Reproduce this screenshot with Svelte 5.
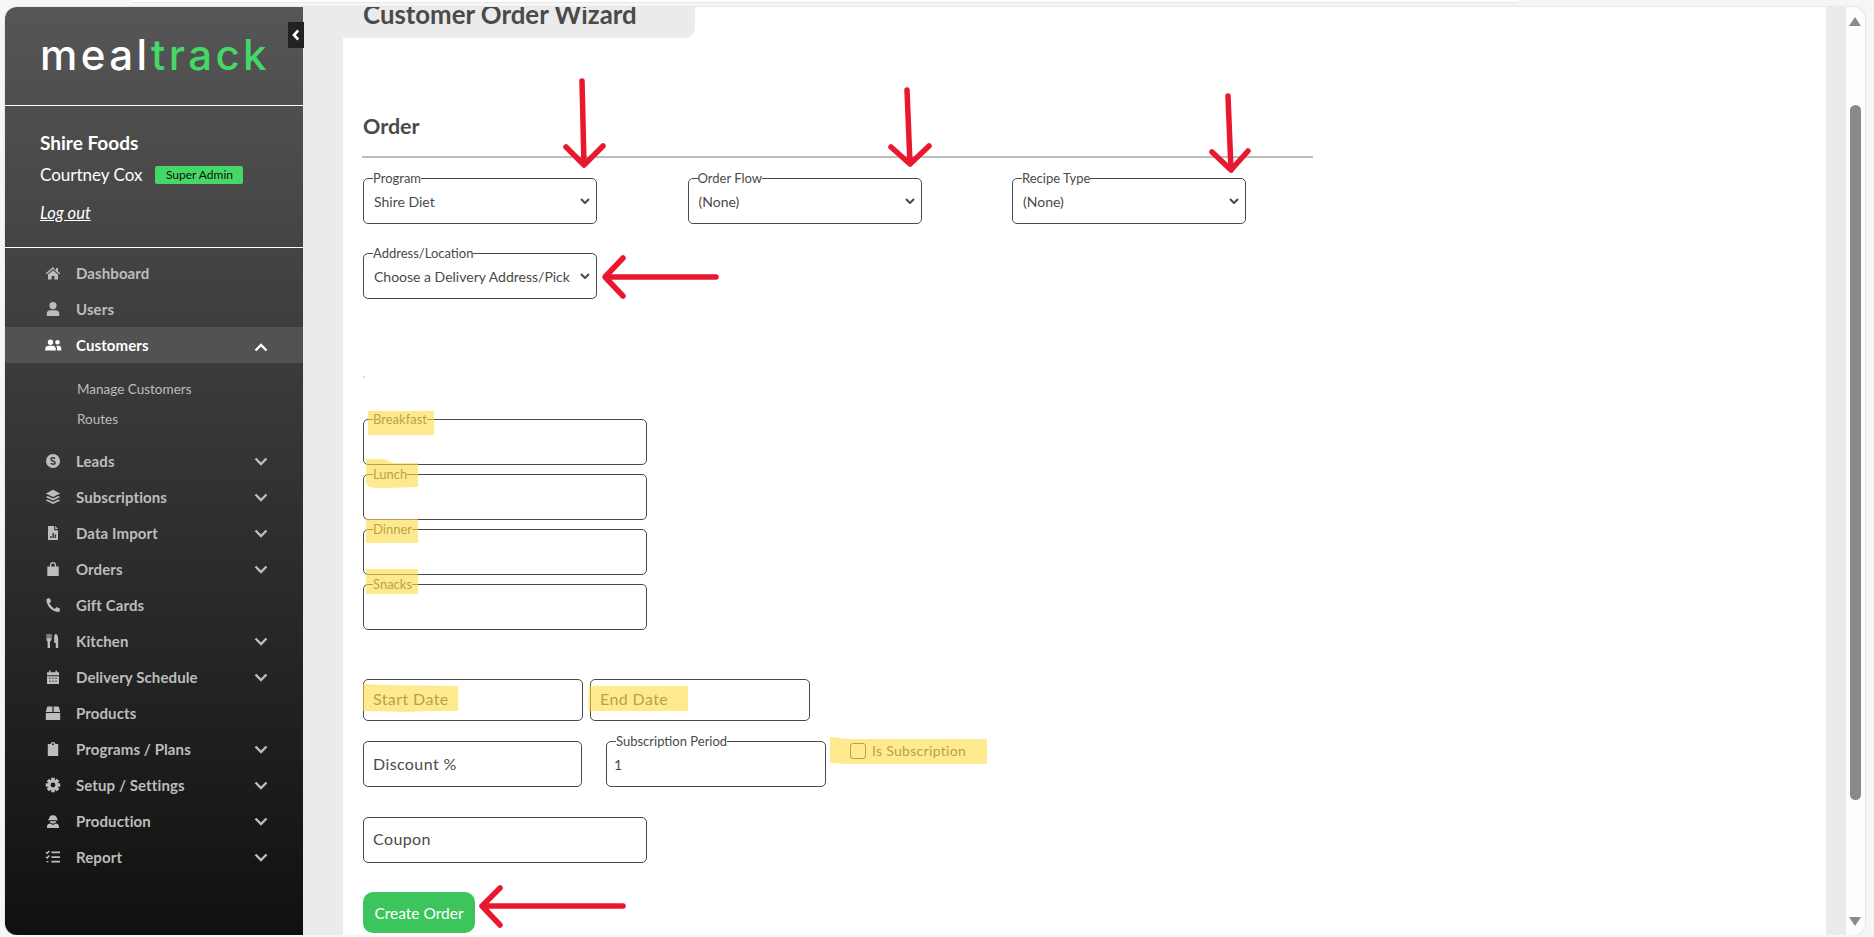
<script>
  const cogTeeth = () => {
    const pts = [];
    for (let i = 0; i < 8; i++) {
      const a = (i * Math.PI) / 4;
      const w = 0.24;
      [[5.2, -w - 0.12], [7.4, -w], [7.4, w], [5.2, w + 0.12]].forEach(([r, o]) => {
        pts.push(`${(8 + r * Math.cos(a + o)).toFixed(2)} ${(8 + r * Math.sin(a + o)).toFixed(2)}`);
      });
    }
    return 'M' + pts.join('L') + 'Z M8 5.6a2.4 2.4 0 1 0 0 4.8 2.4 2.4 0 0 0 0-4.8Z';
  };

  const icons = {
    home: { d: 'M8 2 .8 8.2l.9 1L8 3.9l6.3 5.3.9-1-2.2-1.9V3h-2v2.6Z M3 9.6V14.5h3.6v-3.6h2.8v3.6H13V9.6L8 5.4Z' },
    user: { d: 'M8 1a3.6 3.6 0 1 1 0 7.2A3.6 3.6 0 0 1 8 1Z M1.8 15v-2.2A3.6 3.6 0 0 1 5.4 9.2h5.2a3.6 3.6 0 0 1 3.6 3.6V15Z' },
    users: { w: 18, d: 'M5.5 2.5a2.7 2.7 0 1 1 0 5.4 2.7 2.7 0 0 1 0-5.4Z M12.5 3a2.3 2.3 0 1 1 0 4.6 2.3 2.3 0 0 1 0-4.6Z M.2 13.5v-2.2a3 3 0 0 1 3-2.6h4.6a3 3 0 0 1 3 2.6v2.2Z M12 13.5v-2.4c0-.9-.3-1.7-.9-2.3h3a2.5 2.5 0 0 1 2.2 2.4v2.3Z' },
    dollar: { d: 'M8 1a7 7 0 1 1 0 14A7 7 0 0 1 8 1Z', s: 'M10 5.8C9.6 5 8.8 4.8 8 4.8c-1.2 0-2 .6-2 1.5 0 2.2 4.1 1.2 4.1 3.4 0 .9-.9 1.5-2.1 1.5-.9 0-1.7-.3-2.1-1.1' },
    layers: { d: 'M8 .8 15.2 4.4 8 8 .8 4.4Z M2.6 6.9.8 7.9 8 11.5l7.2-3.6-1.8-1L8 9.6Z M2.6 10.4l-1.8 1L8 15l7.2-3.6-1.8-1L8 13.1Z' },
    file: { d: 'M3 1h6.2v4.2H13V15H3Z M10.2 1 13 4h-2.8Z', s: 'M6 13v-2M8.2 13V8M10.4 13V9.5' },
    bag: { d: 'M2.3 5.4h2.6V4a3.1 3.1 0 0 1 6.2 0v1.4h2.6V15H2.3Z M6.2 5.4h3.6V4a1.8 1.8 0 0 0-3.6 0Z' },
    phone: { d: 'M4.6 1 1.4 2C1.4 9.2 7 15 14.2 15l1-3.2-3.7-1.7-1.6 1.9C8 11 5.2 8.2 4.4 6.2L6.2 4.6Z' },
    utensils: { d: 'M1.5 1h1v4.2h.9V1h1.2v4.2h.9V1h1v5.4A2.1 2.1 0 0 1 5 8.4V15H2.6V8.4A2.1 2.1 0 0 1 1.5 6.4Z M11 1c1.6.4 2.2 3.2 2.2 6.4V15h-2.4v-5H9.2V3.5C9.2 2 10 1 11 1Z' },
    calendar: { d: 'M2 3.2h2V1.4h1.5v1.8h5V1.4H12v1.8h2v3H2Z M2 7.2h12V15H2Z', s: 'M4.5 9.2h1M7.5 9.2h1M10.5 9.2h1M4.5 12.2h1M7.5 12.2h1M10.5 12.2h1' },
    box: { d: 'M.8 6.9 2 2.3C2.2 1.7 2.6 1.5 3 1.5h4.4v5.4Z M8.6 1.5H13c.4 0 .8.2 1 .8l1.2 4.6H8.6Z M.8 7.9h14.4V15H.8Z' },
    clip: { d: 'M2.8 3h2.7a2.6 2.6 0 0 1 5 0h2.7v12H2.8Z M8 2.2a1 1 0 1 0 0 2 1 1 0 0 0 0-2Z' },
    cog: { d: cogTeeth() },
    hat: { d: 'M4 6.2A4 4 0 0 1 12 6.2h1v1H3v-1Z M4.6 8.2h6.8A3.4 3.4 0 0 1 8 10.4a3.4 3.4 0 0 1-3.4-2.2Z M2 15v-1.4a3.4 3.4 0 0 1 3.2-3L8 12l2.8-1.4a3.4 3.4 0 0 1 3.2 3V15Z' },
    tasks: { d: 'M6.4 2.6H15v1.7H6.4Z M6.4 7.2H15v1.7H6.4Z M6.4 11.8H15v1.7H6.4Z', l: 'M1 3.2l1.2 1.1L4.4 2M1 7.8 2.2 8.9 4.4 6.6M1.4 12.6h2' }
  };

  const before = [
    { label: 'Dashboard', icon: 'home' },
    { label: 'Users', icon: 'user' }
  ];
  const after = [
    { label: 'Leads', icon: 'dollar', more: true },
    { label: 'Subscriptions', icon: 'layers', more: true },
    { label: 'Data Import', icon: 'file', more: true },
    { label: 'Orders', icon: 'bag', more: true },
    { label: 'Gift Cards', icon: 'phone' },
    { label: 'Kitchen', icon: 'utensils', more: true },
    { label: 'Delivery Schedule', icon: 'calendar', more: true },
    { label: 'Products', icon: 'box' },
    { label: 'Programs / Plans', icon: 'clip', more: true },
    { label: 'Setup / Settings', icon: 'cog', more: true },
    { label: 'Production', icon: 'hat', more: true },
    { label: 'Report', icon: 'tasks', more: true }
  ];
  const meals = ['Breakfast', 'Lunch', 'Dinner', 'Snacks'];
  const topSelects = [
    { legend: 'Program', value: 'Shire Diet' },
    { legend: 'Order Flow', value: '(None)' },
    { legend: 'Recipe Type', value: '(None)' }
  ];
</script>

{#snippet icon(name)}
  {@const i = icons[name]}
  <svg class="ico" class:wide={i.w === 18} viewBox="0 0 {i.w || 16} 16">
    <path d={i.d} fill="currentColor" fill-rule="evenodd" />
    {#if i.s}<path d={i.s} fill="none" stroke="#333" stroke-width="1.4" />{/if}
    {#if i.l}<path d={i.l} fill="none" stroke="currentColor" stroke-width="1.4" />{/if}
  </svg>
{/snippet}

{#snippet chevron(flip)}
  <svg class="chev" class:flip viewBox="0 0 14 9"><path d="M1.5 1.5 7 7l5.5-5.5" /></svg>
{/snippet}

{#snippet caret()}
  <svg class="caret" viewBox="0 0 10 6"><path d="M1 1l4 4 4-4" /></svg>
{/snippet}

<div class="strip"></div>
<div class="window">
  <aside class="sidebar">
    <div class="brand"><span class="meal">meal</span><span class="track">track</span></div>
    <div class="who">
      <div class="org">Shire Foods</div>
      <div class="person"><span>Courtney Cox</span><span class="badge">Super Admin</span></div>
      <a class="logout" href="#top">Log out</a>
    </div>
    <nav class="nav">
      {#each before as item}
        <div class="row">{@render icon(item.icon)}<span class="lab">{item.label}</span></div>
      {/each}
      <div class="row active">{@render icon('users')}<span class="lab">Customers</span>{@render chevron(true)}</div>
      <div class="sub">
        <div class="subrow">Manage Customers</div>
        <div class="subrow">Routes</div>
      </div>
      {#each after as item}
        <div class="row">
          {@render icon(item.icon)}<span class="lab">{item.label}</span>
          {#if item.more}{@render chevron(false)}{/if}
        </div>
      {/each}
    </nav>
    <button class="collapse" aria-label="Collapse">
      <svg viewBox="0 0 8 12"><path d="M6.2 1.5 2 6l4.2 4.5" /></svg>
    </button>
  </aside>

  <main class="main">
    <div class="panel">
      <div class="tab">Customer Order Wizard</div>
      <h2 class="order">Order</h2>
      <div class="rule"></div>

      <div class="tops">
        {#each topSelects as s}
          <fieldset class="fs sel">
            <legend>{s.legend}</legend>
            <select><option>{s.value}</option></select>
            {@render caret()}
          </fieldset>
        {/each}
      </div>

      <fieldset class="fs sel addr">
        <legend>Address/Location</legend>
        <select><option>Choose a Delivery Address/Pickup Location</option></select>
        {@render caret()}
      </fieldset>

      <div class="dot"></div>

      <div class="meals">
        {#each meals as m}
          <fieldset class="fs meal-box"><legend>{m}</legend></fieldset>
        {/each}
      </div>

      <div class="dates">
        <input class="inp date" placeholder="Start Date" />
        <input class="inp date" placeholder="End Date" />
      </div>

      <div class="subs">
        <input class="inp disc" placeholder="Discount %" />
        <fieldset class="fs period">
          <legend>Subscription Period</legend>
          <input class="bare" value="1" />
        </fieldset>
        <label class="check"><span class="box"></span>Is Subscription</label>
      </div>

      <input class="inp coupon" placeholder="Coupon" />
      <button class="create">Create Order</button>
    </div>
    <div class="bar">
      <span class="bar-up"></span>
      <span class="thumb"></span>
      <span class="bar-down"></span>
    </div>
  </main>
</div>

<svg class="marks" viewBox="0 0 1874 937" width="1874" height="937">
  <g class="hl">
    <rect x="368" y="411" width="66" height="24" />
    <path d="M366 459h14q6 0 10 3l6 1h22v24l-33 1h-7q-12 0-12-6Z" />
    <rect x="366" y="519" width="52" height="24" />
    <rect x="366" y="569" width="52" height="25" />
    <path d="M363 684l20 1 75 1v25h-30l-20 1-45-1Z" />
    <path d="M589 686h99v25h-100Z" />
    <path d="M830 737l20 2h137v25H850l-20-1Z" />
  </g>
  <g class="arrows">
    <path d="M582 81 584 165M566 147 584 165 603 146" />
    <path d="M907 90 910 164M891 147 910 164 929 146" />
    <path d="M1228 96 1231 170M1212 152 1231 170 1248 151" />
    <path d="M716 277H606M623 258 605 277 623 296" />
    <path d="M623 906H483M500 888 482 906 500 925" />
  </g>
</svg>

<style>
  :global(body) {
    margin: 0;
    background: #f6f6f6;
    overflow: hidden;
    font-family: "Lato", "Liberation Sans", sans-serif;
    color: #4a4a4a;
  }
  .strip {
    height: 2px;
    margin: 0 355px 0 132px;
    background: #fff;
    border-bottom: 1px solid #e8e8e8;
    border-radius: 0 0 8px 8px;
  }
  .window {
    display: flex;
    width: 1860px;
    height: 928px;
    margin: 4px 9px 0 5px;
    border-radius: 12px;
    overflow: hidden;
    box-shadow: 0 0 2px rgba(0, 0, 0, 0.2);
  }
  .sidebar {
    position: relative;
    flex: 0 0 298px;
    background: linear-gradient(#565656, #101010);
    color: #fff;
  }
  .brand {
    height: 99px;
    box-sizing: border-box;
    padding: 23px 0 0 35px;
    font-family: "Inter", sans-serif;
    font-size: 42px;
    font-weight: 500;
    line-height: 50px;
    letter-spacing: 3.4px;
    border-bottom: 1px solid #fff;
  }
  .meal { color: #fff; }
  .track { color: #45d866; }
  .who {
    height: 142px;
    box-sizing: border-box;
    padding: 25px 0 0 35px;
    border-bottom: 1px solid #fff;
  }
  .org { font-size: 19px; font-weight: 700; line-height: 24px; }
  .person {
    display: flex;
    align-items: center;
    gap: 13px;
    margin-top: 8px;
    font-size: 17px;
    line-height: 24px;
  }
  .badge {
    width: 88px;
    height: 18px;
    background: #45d866;
    border-radius: 2px;
    color: #111;
    font-size: 12px;
    line-height: 18px;
    text-align: center;
  }
  .logout {
    display: inline-block;
    margin-top: 14px;
    color: #fff;
    font-size: 16.5px;
    line-height: 24px;
    font-style: italic;
  }
  .nav { padding-top: 7px; }
  .row {
    display: flex;
    align-items: center;
    height: 36px;
    padding: 0 35px 0 40px;
    color: #bdbdbd;
    font-size: 15px;
    font-weight: 700;
    letter-spacing: 0.1px;
  }
  .row.active {
    color: #fff;
    background: #525252;
  }
  .ico { width: 16px; height: 16px; flex: 0 0 16px; margin-right: 15px; }
  .ico.wide { width: 18px; flex-basis: 18px; margin-right: 13px; }
  .lab { flex: 1; }
  .chev { width: 14px; height: 9px; fill: none; stroke: currentColor; stroke-width: 2.4; }
  .chev.flip { transform: translateY(2px) scaleY(-1); }
  .sub { padding: 11px 0 9px; }
  .subrow {
    height: 30px;
    padding-left: 72px;
    line-height: 30px;
    font-size: 13.5px;
    color: #bdbdbd;
  }
  .collapse {
    position: absolute;
    top: 15px;
    right: -1px;
    width: 16px;
    height: 26px;
    padding: 0;
    border: 0;
    background: #222;
    display: flex;
    align-items: center;
    justify-content: center;
  }
  .collapse svg { width: 8px; height: 12px; fill: none; stroke: #fff; stroke-width: 2.6; }

  .main {
    flex: 1;
    display: flex;
    background: #ebebeb;
    padding-left: 40px;
  }
  .panel {
    width: 1483px;
    box-sizing: border-box;
    background: #fff;
    padding-left: 20px;
    overflow: hidden;
  }
  .tab {
    width: 332px;
    height: 31px;
    margin-left: -20px;
    padding-left: 20px;
    box-sizing: content-box;
    background: #ebebeb;
    border-radius: 0 0 10px 0;
    font-size: 25.8px;
    font-weight: 700;
    line-height: 14px;
    white-space: nowrap;
    color: #4a4a4a;
  }
  .order {
    margin: 76px 0 0 0;
    font-size: 21.5px;
    line-height: 24px;
    font-weight: 700;
  }
  .rule {
    width: 951px;
    height: 2px;
    margin: 18px 0 0 -1px;
    background: #bcbcbc;
  }
  .fs {
    position: relative;
    margin: 0;
    padding: 0;
    min-width: 0;
    box-sizing: border-box;
    border: 1px solid #4a4a4a;
    border-radius: 5px;
  }
  .fs legend {
    margin-left: 9px;
    padding: 0;
    font-size: 13px;
    line-height: 13px;
    color: #4a4a4a;
  }
  .tops { display: flex; gap: 90.5px; margin-top: 14px; }
  .sel { width: 234px; height: 52px; }
  .sel select {
    display: block;
    width: 100%;
    height: 32px;
    padding: 0 26px 0 10px;
    border: 0;
    outline: 0;
    appearance: none;
    background: transparent;
    font: 14px "Lato", sans-serif;
    color: #4a4a4a;
  }
  .caret {
    position: absolute;
    right: 6px;
    bottom: 19px;
    width: 10px;
    height: 6px;
    fill: none;
    stroke: #4a4a4a;
    stroke-width: 2;
    pointer-events: none;
  }
  .addr { margin-top: 23px; }
  .dot { width: 2px; height: 2px; margin-top: 77px; background: #ddd; }
  .meals { display: flex; flex-direction: column; gap: 3px; margin-top: 35px; }
  .meal-box { width: 284px; height: 52px; }
  .inp {
    display: block;
    box-sizing: border-box;
    height: 46px;
    padding: 0 9px 4px;
    border: 1px solid #4a4a4a;
    border-radius: 5px;
    outline: 0;
    font: 16px "Lato", sans-serif;
    letter-spacing: 0.4px;
    color: #4a4a4a;
  }
  .inp::placeholder { color: #4a4a4a; opacity: 1; }
  .dates { display: flex; gap: 7px; margin-top: 49px; }
  .date { width: 220px; height: 42px; }
  .subs { display: flex; align-items: flex-end; gap: 24px; margin-top: 14px; }
  .disc { width: 219px; padding-bottom: 2px; }
  .period { width: 220px; height: 52px; }
  .bare {
    display: block;
    width: 100%;
    box-sizing: border-box;
    height: 32px;
    padding: 0 7px;
    border: 0;
    outline: 0;
    background: transparent;
    font: 14px "Lato", sans-serif;
    color: #4a4a4a;
  }
  .check {
    display: flex;
    align-items: center;
    align-self: flex-start;
    gap: 6px;
    margin-top: 8px;
    font-size: 14px;
    line-height: 16px;
    letter-spacing: 0.3px;
    color: #4a4a4a;
  }
  .box {
    width: 14px;
    height: 14px;
    border: 1px solid #4a4a4a;
    border-radius: 3px;
  }
  .coupon { width: 284px; margin-top: 30px; }
  .create {
    display: block;
    width: 112px;
    height: 41px;
    margin-top: 29px;
    padding: 1px 0 0;
    border: 0;
    border-radius: 10px;
    background: #3bc55c;
    color: #fff;
    font: 15.5px "Lato", sans-serif;
  }
  .bar {
    position: relative;
    width: 19px;
    margin-left: 20px;
    background: #fdfdfd;
  }
  .thumb {
    position: absolute;
    left: 4px;
    top: 98px;
    width: 11px;
    height: 695px;
    border-radius: 6px;
    background: #8a8a8a;
  }
  .bar-up, .bar-down {
    position: absolute;
    left: 3px;
    width: 0;
    height: 0;
    border-left: 6.5px solid transparent;
    border-right: 6.5px solid transparent;
  }
  .bar-up { top: 10px; border-bottom: 9px solid #8a8a8a; }
  .bar-down { top: 910px; border-top: 9px solid #8a8a8a; }

  .marks {
    position: absolute;
    left: 0;
    top: 0;
    pointer-events: none;
  }
  .hl { fill: #ffdc46; opacity: 0.6; }
  .arrows path {
    fill: none;
    stroke: #e8192f;
    stroke-width: 5.5;
    stroke-linecap: round;
    stroke-linejoin: round;
  }
</style>
